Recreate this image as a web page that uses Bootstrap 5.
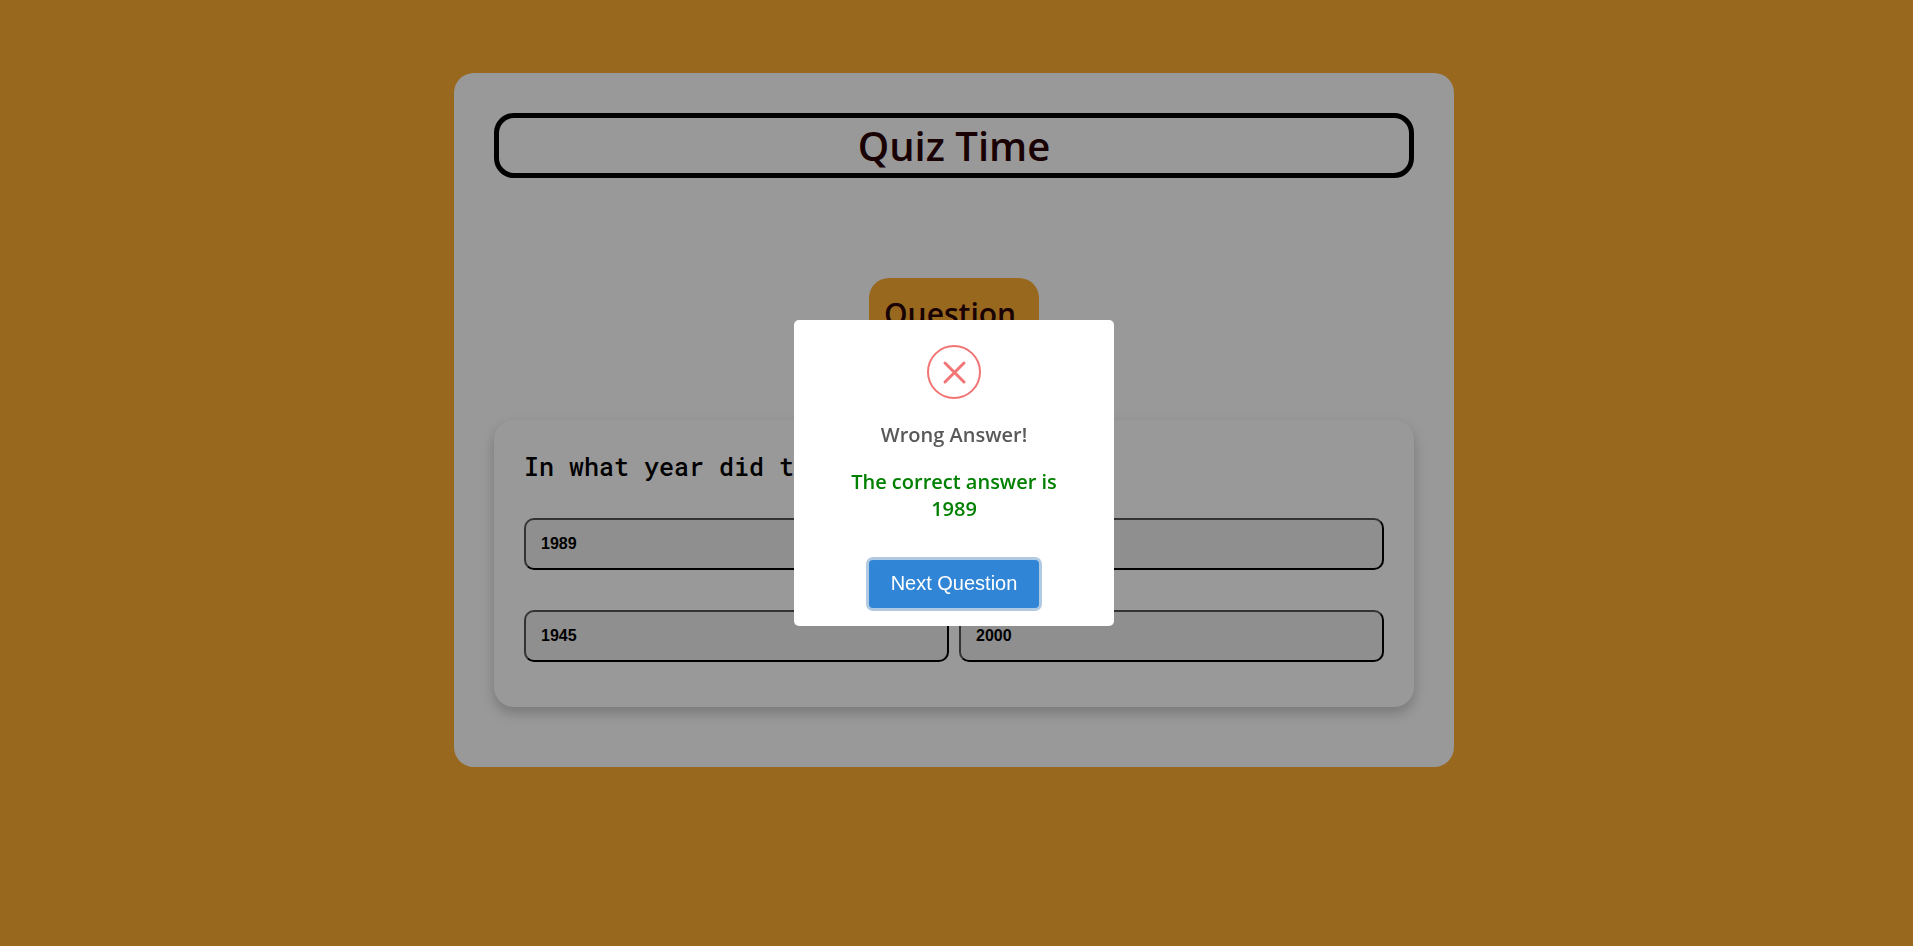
<!DOCTYPE html>
<html lang="en">
<head>
<meta charset="utf-8">
<meta name="viewport" content="width=device-width, initial-scale=1">
<title>Quiz Time</title>
<link href="https://cdn.jsdelivr.net/npm/bootstrap@5.3.0/dist/css/bootstrap.min.css" rel="stylesheet">
<style>
  :root { --quiz-orange: #feae32; --gutter: 5px; }
  body { background: var(--quiz-orange); font-family: "Open Sans", "Noto Sans", sans-serif; font-weight: 600; color: #2a0208; padding-right: var(--gutter); }
  .quiz { max-width: 1000px; margin: 73px auto; padding: 40px 40px 60px; border-radius: 20px; background: #fff; }
  .quiz-title { border: 5px solid #000; border-radius: 20px; font-size: 40px; line-height: 55px; font-weight: 600; margin-bottom: 100px; }
  .counter { width: 170px; height: 102px; padding: 15px; border-radius: 20px; background: var(--quiz-orange); font-size: 30px; line-height: 42px; margin-bottom: 40px; }
  .panel { padding: 30px 30px 45px; border-radius: 20px; background: #fff; box-shadow: 0 6px 13px rgba(0, 0, 0, .22); }
  .prompt { font-family: "Roboto Mono", "DejaVu Sans Mono", monospace; font-size: 25px; line-height: 34px; font-weight: 500; color: #000; margin-bottom: 34px; }
  .answers { column-gap: 10px; row-gap: 40px; grid-template-columns: 1fr 1fr; }
  .answer { height: 52px; padding: 0 15px 1px; border: 2px solid; border-color: #555 #000 #000 #555; border-radius: 10px; background: #efefef; color: #000; text-align: left; font: bold 16px "Liberation Sans", Arial, sans-serif; }
  .modal { padding-right: var(--gutter); }
  .modal-backdrop { --bs-backdrop-opacity: .4; }
  .modal-dialog { --bs-modal-width: 320px; --bs-modal-margin: 0px; }
  .alert-box { border: 0; border-radius: 5px; padding: 25px 40px 18px; font-size: 20px; line-height: 27px; }
  .alert-box h2 { font-size: 20px; line-height: 27px; font-weight: 600; color: #595959; margin: 22px 0 20px; }
  .alert-box p { color: #008000; margin-bottom: 38px; }
  .btn-next { --bs-btn-font-family: "Liberation Sans", Arial, sans-serif; --bs-btn-color: #fff; --bs-btn-bg: #3085d6; --bs-btn-border-radius: 4px; --bs-btn-border-width: 0; --bs-btn-hover-color: #fff; --bs-btn-hover-bg: #2b77c0; width: 170px; height: 48px; padding: 0 0 2px; font-size: 20px; font-weight: 400; box-shadow: 0 0 0 3px rgba(100, 150, 200, .5); }
</style>
</head>
<body>
<main class="quiz">
  <h1 class="quiz-title text-center">Quiz Time</h1>
  <div class="counter mx-auto">Question</div>
  <section class="panel">
    <h2 class="prompt">In what year did t</h2>
    <div class="answers d-grid">
      <button type="button" class="answer">1989</button>
      <button type="button" class="answer" aria-label="Answer 2"></button>
      <button type="button" class="answer">1945</button>
      <button type="button" class="answer">2000</button>
    </div>
  </section>
</main>

<div class="modal-backdrop show"></div>
<div class="modal d-block" role="dialog" aria-modal="true" aria-labelledby="result-title">
  <div class="modal-dialog modal-dialog-centered">
    <div class="modal-content alert-box align-items-center text-center">
      <svg width="54" height="54" viewBox="0 0 54 54" fill="none" stroke="#f27474" aria-hidden="true">
        <circle cx="27" cy="27" r="26" stroke-width="2"/>
        <path d="M18 18 37 37M37 18 18 37" stroke-width="3" stroke-linecap="round"/>
      </svg>
      <h2 id="result-title">Wrong Answer!</h2>
      <p>The correct answer is 1989</p>
      <button type="button" class="btn btn-next">Next Question</button>
    </div>
  </div>
</div>
<script src="https://cdn.jsdelivr.net/npm/bootstrap@5.3.0/dist/js/bootstrap.bundle.min.js"></script>
</body>
</html>
